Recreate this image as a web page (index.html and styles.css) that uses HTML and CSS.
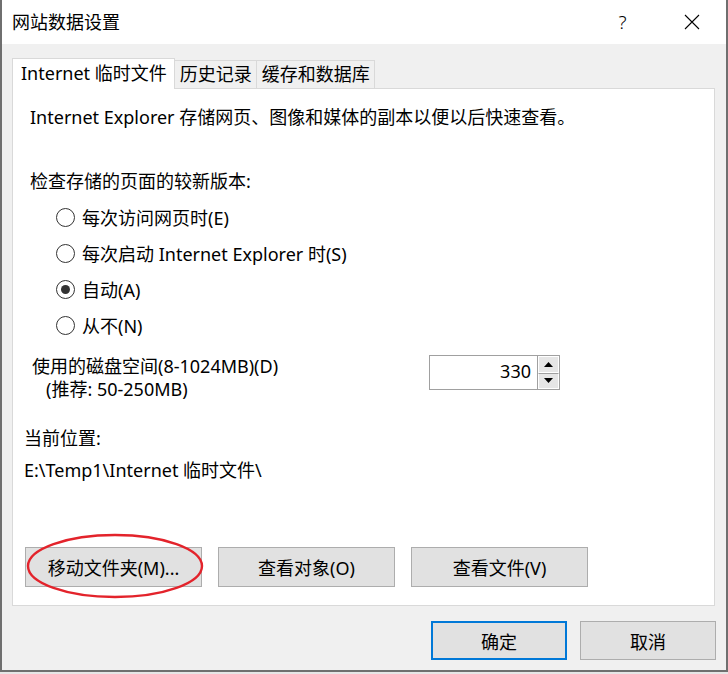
FILE: index.html
```html
<!DOCTYPE html>
<html lang="zh-CN">
<head>
<meta charset="utf-8">
<title>网站数据设置</title>
<link rel="stylesheet" href="styles.css">
</head>
<body>
<div class="window">
  <div class="titlebar">
    <div class="title">网站数据设置</div>
    <div class="caption-btn help">?</div>
    <div class="caption-btn close">
      <svg width="16" height="16" viewBox="0 0 16 16"><path d="M1 1 L15 15 M15 1 L1 15" stroke="#000" stroke-width="1.1" fill="none"/></svg>
    </div>
  </div>
  <div class="client">
    <div class="tabs">
      <div class="tab active">Internet 临时文件</div>
      <div class="tab">历史记录</div>
      <div class="tab">缓存和数据库</div>
    </div>
    <div class="panel">
      <div class="desc">Internet Explorer 存储网页、图像和媒体的副本以便以后快速查看。</div>
      <div class="check-label">检查存储的页面的较新版本:</div>
      <div class="radios">
        <div class="radio-row"><span class="radio"></span><span>每次访问网页时(E)</span></div>
        <div class="radio-row"><span class="radio"></span><span>每次启动 Internet Explorer 时(S)</span></div>
        <div class="radio-row"><span class="radio checked"></span><span>自动(A)</span></div>
        <div class="radio-row"><span class="radio"></span><span>从不(N)</span></div>
      </div>
      <div class="disk-row">
        <div class="disk-labels">
          <div class="disk-l1">使用的磁盘空间(8-1024MB)(D)</div>
          <div class="disk-l2">(推荐: 50-250MB)</div>
        </div>
        <div class="spin">
          <div class="spin-input">330</div>
          <div class="spin-arrows">
            <div class="spin-btn"><svg width="9" height="5" viewBox="0 0 9 5"><path d="M0 5 L4.5 0 L9 5 Z" fill="#000"/></svg></div>
            <div class="spin-btn"><svg width="9" height="5" viewBox="0 0 9 5"><path d="M0 0 L4.5 5 L9 0 Z" fill="#000"/></svg></div>
          </div>
        </div>
      </div>
      <div class="loc-label">当前位置:</div>
      <div class="loc-path">E:\Temp1\Internet 临时文件\</div>
      <div class="btn-row">
        <div class="btn">移动文件夹(M)...</div>
        <div class="btn">查看对象(O)</div>
        <div class="btn">查看文件(V)</div>
      </div>
      <svg class="mark" width="184" height="72" viewBox="0 0 184 72"><ellipse cx="92" cy="35" rx="87" ry="31" fill="none" stroke="#e3232b" stroke-width="2.4"/></svg>
    </div>
    <div class="dlg-buttons">
      <div class="btn dlg default">确定</div>
      <div class="btn dlg">取消</div>
    </div>
  </div>
</div>
</body>
</html>
```

FILE: styles.css
```css
html, body {
  margin: 0;
  padding: 0;
  background: #e6e6e6;
}
body {
  font-family: "Noto Sans", "Noto Sans CJK SC", sans-serif;
  font-size: 18px;
  color: #000;
}
.window {
  width: 728px;
  height: 672px;
  box-sizing: border-box;
  border-left: 2px solid #6f6f6f;
  border-right: 2px solid #6f6f6f;
  border-bottom: 2px solid #6f6f6f;
  background: #f0f0f0;
  display: flex;
  flex-direction: column;
}
.titlebar {
  height: 44px;
  background: #fff;
  display: flex;
  align-items: center;
  flex-shrink: 0;
}
.title {
  flex: 1;
  padding-left: 10px;
  font-size: 18px;
  line-height: 44px;
}
.caption-btn {
  width: 69px;
  height: 44px;
  display: flex;
  align-items: center;
  justify-content: center;
}
.help {
  font-size: 19px;
  font-weight: 300;
}
.client {
  flex: 1;
  padding: 14px 10px 0 10px;
}
.tabs {
  display: flex;
  align-items: flex-end;
  height: 30px;
}
.tab {
  height: 28px;
  box-sizing: border-box;
  border: 1px solid #d9d9d9;
  border-bottom: none;
  border-left: none;
  padding: 0 4px 0 5px;
  line-height: 27px;
  background: #f0f0f0;
  white-space: nowrap;
}
.tab.active {
  height: 31px;
  margin-bottom: -1px;
  position: relative;
  z-index: 1;
  background: #fff;
  border-left: 1px solid #d9d9d9;
  padding: 0 7px 0 8px;
  line-height: 29px;
}
.panel {
  position: relative;
  width: 703px;
  height: 518px;
  box-sizing: border-box;
  border: 1px solid #d9d9d9;
  background: #fff;
}
.desc {
  margin-top: 16px;
  padding-left: 17px;
  line-height: 24px;
}
.check-label {
  margin-top: 40px;
  padding-left: 17px;
  line-height: 24px;
}
.radios {
  margin-top: 6px;
  padding-left: 43px;
}
.radio-row {
  height: 36px;
  display: flex;
  align-items: center;
  gap: 7px;
}
.radio {
  width: 19px;
  height: 19px;
  box-sizing: border-box;
  border: 1px solid #333;
  border-radius: 50%;
  background: #fff;
  display: flex;
  align-items: center;
  justify-content: center;
}
.radio.checked::after {
  content: "";
  width: 9px;
  height: 9px;
  border-radius: 50%;
  background: #333;
}
.disk-row {
  margin-top: 12px;
  display: flex;
  align-items: flex-start;
}
.disk-labels {
  width: 416px;
  line-height: 23px;
}
.disk-l1 {
  padding-left: 19px;
}
.disk-l2 {
  padding-left: 33px;
}
.spin {
  display: flex;
  height: 35px;
}
.spin-input {
  width: 108px;
  height: 35px;
  box-sizing: border-box;
  border: 1px solid #a0a0a0;
  border-right: none;
  text-align: right;
  padding-right: 6px;
  line-height: 31px;
}
.spin-arrows {
  display: flex;
  flex-direction: column;
  width: 23px;
  height: 35px;
  box-sizing: border-box;
  border: 1px solid #a0a0a0;
  background: #fff;
}
.spin-btn {
  flex: 1;
  background: #e6e6e6;
  border: 1px solid #fff;
  display: flex;
  align-items: center;
  justify-content: center;
}
.spin-btn + .spin-btn {
  border-top: 1px solid #a0a0a0;
}
.loc-label {
  margin-top: 25px;
  padding-left: 11px;
  line-height: 24px;
}
.loc-path {
  margin-top: 8px;
  padding-left: 11px;
  line-height: 24px;
}
.btn-row {
  margin-top: 65px;
  padding-left: 12px;
  display: flex;
  gap: 16px;
}
.btn {
  width: 177px;
  height: 40px;
  box-sizing: border-box;
  border: 1px solid #adadad;
  background: #e1e1e1;
  display: flex;
  align-items: center;
  justify-content: center;
}
.mark {
  position: absolute;
  left: 10px;
  top: 442px;
}
.dlg-buttons {
  margin-top: 15px;
  display: flex;
  justify-content: flex-end;
  gap: 13px;
}
.btn.dlg {
  width: 136px;
  height: 39px;
}
.btn.dlg.default {
  border: 2px solid #0078d7;
}
```
